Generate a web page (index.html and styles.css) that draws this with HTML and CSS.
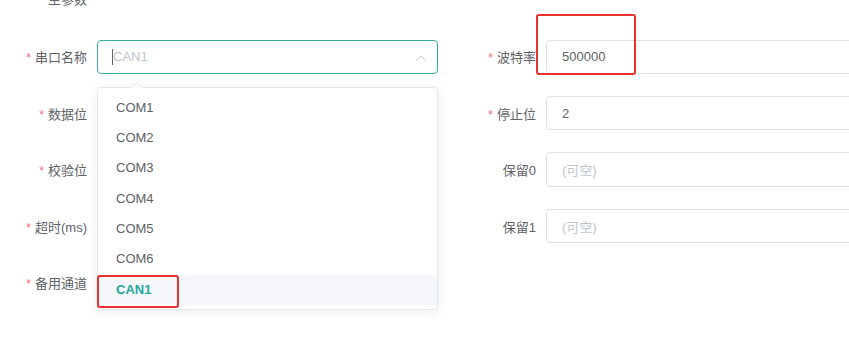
FILE: index.html
```html
<!DOCTYPE html>
<html lang="zh-CN">
<head>
    <meta charset="UTF-8">
    <meta name="viewport" content="width=device-width, initial-scale=1.0">
    <title>串口参数</title>
    <link rel="stylesheet" href="styles.css">
</head>
<body>
  <div class="page">
    <div class="section-title">主参数</div>

    <div class="form-grid">
        <div class="form-item">
            <label class="form-label required">串口名称</label>
            <div class="select-wrap">
                <div class="field focused">
                    <span class="caret"></span><span class="placeholder">CAN1</span>
                    <svg class="arrow" width="10" height="6" viewBox="0 0 10 6">
                        <path d="M0.5 5.5 L5 1 L9.5 5.5" fill="none" stroke="#c0c4cc" stroke-width="1"/>
                    </svg>
                </div>
                <div class="dropdown">
                    <span class="popper-arrow"></span>
                    <ul class="options">
                        <li>COM1</li>
                        <li>COM2</li>
                        <li>COM3</li>
                        <li>COM4</li>
                        <li>COM5</li>
                        <li>COM6</li>
                        <li class="selected">CAN1</li>
                    </ul>
                    <span class="mark mark-option"></span>
                </div>
            </div>
        </div>
        <div class="form-item">
            <label class="form-label required">波特率</label>
            <div class="field"><span class="value">500000</span></div>
            <span class="mark mark-baud"></span>
        </div>

        <div class="form-item">
            <label class="form-label required">数据位</label>
            <div class="field"></div>
        </div>
        <div class="form-item">
            <label class="form-label required">停止位</label>
            <div class="field"><span class="value">2</span></div>
        </div>

        <div class="form-item">
            <label class="form-label required">校验位</label>
            <div class="field"></div>
        </div>
        <div class="form-item">
            <label class="form-label">保留0</label>
            <div class="field"><span class="placeholder">(可空)</span></div>
        </div>

        <div class="form-item">
            <label class="form-label required">超时(ms)</label>
            <div class="field"></div>
        </div>
        <div class="form-item">
            <label class="form-label">保留1</label>
            <div class="field"><span class="placeholder">(可空)</span></div>
        </div>

        <div class="form-item">
            <label class="form-label required">备用通道</label>
            <div class="field"></div>
        </div>
    </div>
  </div>
</body>
</html>
```

FILE: styles.css
```css
html, body {
  margin: 0;
  background: #fff;
}
body {
  font-family: "Liberation Sans", "Noto Sans CJK SC", sans-serif;
  font-size: 13px;
  color: #606266;
  overflow: hidden;
}
.page {
  width: 849px;
  height: 350px;
  overflow: hidden;
  position: relative;
}
.section-title {
  margin: -8px 0 0 48px;
  line-height: 16px;
  height: 16px;
  color: #606266;
}
.form-grid {
  margin-top: 31.5px;
  display: grid;
  grid-template-columns: 438px 420px;
  column-gap: 11px;
  row-gap: 22.2px;
}
.form-item {
  display: flex;
  align-items: center;
  height: 34.3px;
  position: relative;
}
.form-label {
  width: 87px;
  padding-right: 10px;
  text-align: right;
  flex-shrink: 0;
  white-space: nowrap;
}
.form-label.required::before {
  content: "*";
  color: #f56c6c;
  margin-right: 4px;
  font-size: 12px;
}
.field {
  flex: 1;
  height: 100%;
  box-sizing: border-box;
  border: 1px solid #dcdfe6;
  border-radius: 4px;
  padding: 0 15px;
  display: flex;
  align-items: center;
  position: relative;
}
.field.focused {
  border-color: #3aa99f;
}
.placeholder {
  color: #c0c4cc;
}
.value {
  color: #606266;
}
.caret {
  display: inline-block;
  width: 1px;
  height: 16px;
  background: #606266;
  margin-left: -1px;
}
.arrow {
  position: absolute;
  right: 11px;
  top: 14px;
}
.select-wrap {
  flex: 1;
  height: 100%;
  position: relative;
  display: flex;
}
.dropdown {
  position: absolute;
  top: 47px;
  left: 0;
  right: 0;
  z-index: 5;
  background: #fff;
  border: 1px solid #e4e7ed;
  border-radius: 4px;
  box-shadow: 0 2px 12px rgba(0, 0, 0, 0.08);
}
.popper-arrow {
  position: absolute;
  top: -6px;
  left: 33px;
  width: 0;
  height: 0;
  border-left: 6px solid transparent;
  border-right: 6px solid transparent;
  border-bottom: 6px solid #e4e7ed;
}
.popper-arrow::after {
  content: "";
  position: absolute;
  top: 1px;
  left: -5px;
  border-left: 5px solid transparent;
  border-right: 5px solid transparent;
  border-bottom: 5px solid #fff;
}
.options {
  list-style: none;
  margin: 0;
  padding: 5px 0 4px;
}
.options li {
  height: 30.4px;
  line-height: 30.4px;
  padding-left: 18px;
  color: #606266;
}
.options li.selected {
  background: #f5f7fa;
  color: #26a69a;
  font-weight: bold;
}
.mark {
  position: absolute;
  border: 2px solid #e8302c;
  border-radius: 3px;
  pointer-events: none;
  z-index: 10;
}
.mark-baud {
  left: 87px;
  top: -26px;
  width: 96px;
  height: 57px;
}
.mark-option {
  left: -1px;
  bottom: 1px;
  width: 78px;
  height: 29px;
}
```
